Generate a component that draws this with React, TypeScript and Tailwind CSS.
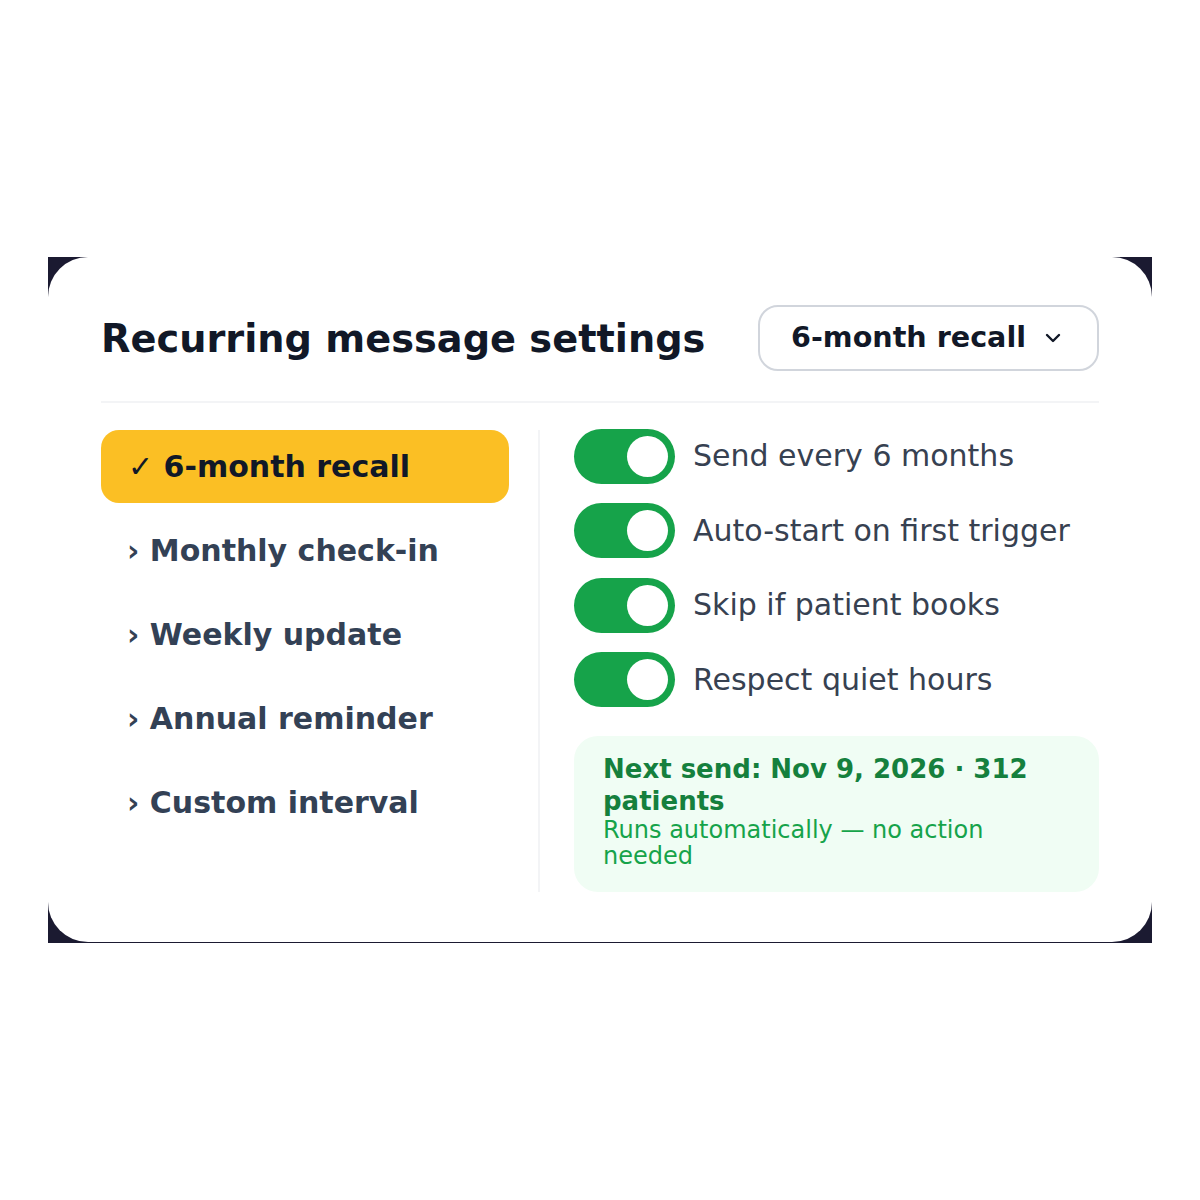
import React from "react";

const items = ["Monthly check-in", "Weekly update", "Annual reminder", "Custom interval"];
const toggles = ["Send every 6 months", "Auto-start on first trigger", "Skip if patient books", "Respect quiet hours"];

export default function App() {
  return (
    <div className="min-h-screen bg-white flex items-center px-12 font-['DejaVu_Sans',sans-serif]">
      <div className="w-full bg-[#1b1a31] pb-[1px]">
        <div className="bg-white rounded-[40px] px-[53px] pt-[48px] pb-[50px]">
          <div className="flex items-center justify-between h-[66px]">
            <h1 className="text-[38.3px] font-bold text-[#111827] leading-none pt-[4px]">Recurring message settings</h1>
            <div className="h-[66px] flex items-center gap-[15px] border-2 border-gray-300 rounded-[20px] pl-[31px] pr-[32px]">
              <span className="text-[28.6px] font-bold text-[#111827] leading-none">6-month recall</span>
              <svg width="24" height="24" viewBox="0 0 24 24" fill="none" stroke="#111827" strokeWidth="2.4" strokeLinecap="round" strokeLinejoin="round">
                <path d="M6 9l6 6 6-6" />
              </svg>
            </div>
          </div>
          <div className="h-[2px] bg-gray-100 mt-[30px] mb-[27px]" />
          <div className="flex">
            <div className="w-[408px] flex flex-col gap-[11px]">
              <div className="h-[73px] flex items-center bg-[#fbbf24] rounded-[18px] pl-[27px] text-[30px] font-bold text-[#111827] whitespace-pre">
                {"✓ 6-month recall"}
              </div>
              {items.map((t) => (
                <div key={t} className="h-[73px] flex items-center pl-[26px] text-[30px] font-bold text-[#334155] whitespace-pre">
                  {"› " + t}
                </div>
              ))}
            </div>
            <div className="w-[2px] bg-gray-100 ml-[29px] mr-[34px]" />
            <div className="flex-1 flex flex-col">
              <div className="flex flex-col gap-[19.67px] -mt-[1px]">
                {toggles.map((t) => (
                  <div key={t} className="flex items-center gap-[18px]">
                    <div className="w-[101px] h-[55px] rounded-full bg-[#16a34a] flex items-center justify-end pr-[7px] shrink-0">
                      <div className="w-[41px] h-[41px] rounded-full bg-white" />
                    </div>
                    <span className="text-[30px] text-[#374151] leading-none">{t}</span>
                  </div>
                ))}
              </div>
              <div className="mt-[29px] bg-[#f0fdf4] rounded-[24px] px-[29px] pt-[17px] pb-[23px]">
                <div className="text-[26px] font-bold text-[#15803d] leading-[32px]">Next send: Nov 9, 2026 · 312 patients</div>
                <div className="text-[24px] text-[#16a34a] leading-[26px]">Runs automatically — no action needed</div>
              </div>
            </div>
          </div>
        </div>
      </div>
    </div>
  );
}
